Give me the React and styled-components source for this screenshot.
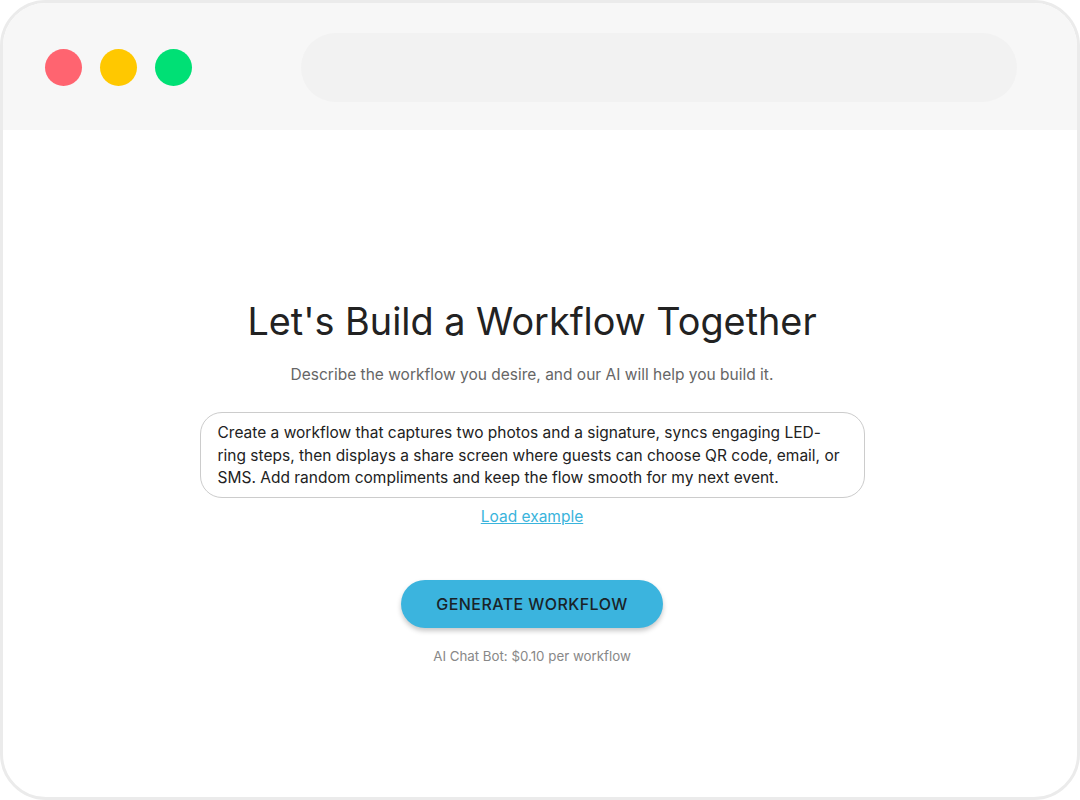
import React from "react";
import styled, { createGlobalStyle } from "styled-components";

const GlobalStyle = createGlobalStyle`
    html, body {
        margin: 0;
        padding: 0;
        background: #ffffff;
    }
    * {
        box-sizing: border-box;
    }
`;

const App = () => {
    return (
        <>
            <GlobalStyle />
            <BrowserFrame>
                <TitleBar>
                    <Dots>
                        <Dot color="#ff6470" />
                        <Dot color="#ffc800" />
                        <Dot color="#00e075" />
                    </Dots>
                    <AddressBar />
                </TitleBar>

                <Main>
                    <Heading>Let's Build a Workflow Together</Heading>
                    <Subheading>
                        Describe the workflow you desire, and our AI will help you build it.
                    </Subheading>

                    <PromptBox>
                        Create a workflow that captures two photos and a signature, syncs engaging LED-ring steps, then displays a share screen where guests can choose QR code, email, or SMS. Add random compliments and keep the flow smooth for my next event.
                    </PromptBox>

                    <ExampleLink href="#">Load example</ExampleLink>

                    <GenerateButton>GENERATE WORKFLOW</GenerateButton>
                    <PriceNote>AI Chat Bot: $0.10 per workflow</PriceNote>
                </Main>
            </BrowserFrame>
        </>
    );
};

export default App;

const BrowserFrame = styled.div`
    width: 1080px;
    height: 800px;
    border: 3px solid #ebebeb;
    border-radius: 46px;
    overflow: hidden;
    background: #ffffff;
    display: flex;
    flex-direction: column;
    font-family: Inter, "Noto Sans", sans-serif;
`;

const TitleBar = styled.div`
    height: 127px;
    flex-shrink: 0;
    background: #f7f7f7;
    display: flex;
    align-items: center;
    padding: 2px 60px 0 42px;
    gap: 109px;
`;

const Dots = styled.div`
    display: flex;
    gap: 18px;
`;

const Dot = styled.span`
    width: 37px;
    height: 37px;
    border-radius: 50%;
    background: ${(p) => p.color};
`;

const AddressBar = styled.div`
    flex: 1;
    height: 69px;
    border-radius: 35px;
    background: #f2f2f2;
`;

const Main = styled.main`
    display: flex;
    flex-direction: column;
    align-items: center;
    padding: 167px 16px 0 0;
`;

const Heading = styled.h1`
    margin: 0;
    font-size: 37.8px;
    line-height: 48px;
    font-weight: 400;
    color: #222222;
`;

const Subheading = styled.p`
    margin: 19px 0 0;
    font-size: 15.5px;
    line-height: 22px;
    color: #666666;
`;

const PromptBox = styled.div`
    margin-top: 26px;
    width: 665px;
    padding: 9px 17px 7px;
    border: 1px solid #cccccc;
    border-radius: 22px;
    font-size: 15.5px;
    line-height: 22.5px;
    color: #222222;
`;

const ExampleLink = styled.a`
    margin-top: 8px;
    font-size: 15.5px;
    line-height: 22px;
    color: #3ab4dc;
    text-decoration: underline;
`;

const GenerateButton = styled.button`
    margin-top: 52px;
    width: 262px;
    height: 48px;
    border: none;
    border-radius: 24px;
    background: #3bb4de;
    color: #1a2328;
    font-family: Inter, "Noto Sans", sans-serif;
    font-size: 16px;
    font-weight: 500;
    letter-spacing: 0.45px;
    box-shadow: 0 3px 5px rgba(0, 0, 0, 0.22);
    cursor: pointer;
`;

const PriceNote = styled.p`
    margin: 19px 0 0;
    font-size: 13.3px;
    line-height: 18px;
    color: #888888;
`;
